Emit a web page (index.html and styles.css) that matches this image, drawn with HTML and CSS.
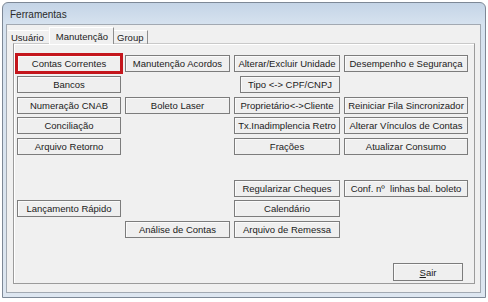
FILE: index.html
```html
<!DOCTYPE html>
<html lang="pt">
<head>
    <meta charset="UTF-8">
    <title>Ferramentas</title>
    <link rel="stylesheet" href="styles.css">
</head>
<body>
    <div class="janela">
        <div class="titulo">Ferramentas</div>
        <div class="cliente">
            <div class="abas">
                <div class="aba">Usuário</div>
                <div class="aba ativa">Manutenção</div>
                <div class="aba">Group</div>
            </div>
            <div class="painel">
                <div class="grade">
                    <button class="botao c1 foco">Contas Correntes</button>
                    <button class="botao c2">Manutenção Acordos</button>
                    <button class="botao c3">Alterar/Excluir Unidade</button>
                    <button class="botao c4">Desempenho e Segurança</button>

                    <button class="botao c1">Bancos</button>
                    <button class="botao c3 estreito">Tipo &lt;-&gt; CPF/CNPJ</button>

                    <button class="botao c1">Numeração CNAB</button>
                    <button class="botao c2">Boleto Laser</button>
                    <button class="botao c3">Proprietário&lt;-&gt;Cliente</button>
                    <button class="botao c4">Reiniciar Fila Sincronizador</button>

                    <button class="botao c1">Conciliação</button>
                    <button class="botao c3">Tx.Inadimplencia Retro</button>
                    <button class="botao c4">Alterar Vínculos de Contas</button>

                    <button class="botao c1">Arquivo Retorno</button>
                    <button class="botao c3">Frações</button>
                    <button class="botao c4">Atualizar Consumo</button>

                    <button class="botao c3 r7">Regularizar Cheques</button>
                    <button class="botao c4 r7">Conf. nº&nbsp; linhas bal. boleto</button>

                    <button class="botao c1 r8">Lançamento Rápido</button>
                    <button class="botao c3 r8">Calendário</button>

                    <button class="botao c2 r9">Análise de Contas</button>
                    <button class="botao c3 r9">Arquivo de Remessa</button>
                </div>
                <div class="rodape">
                    <button class="botao sair"><u>S</u>air</button>
                </div>
            </div>
        </div>
    </div>
</body>
</html>
```

FILE: styles.css
```css
body {
    margin: 0;
    background-color: #fff;
    font-family: "Liberation Sans", Arial, sans-serif;
    font-size: 9.5px;
    color: #1b1b1b;
}

.janela {
    box-sizing: border-box;
    width: 484px;
    height: 296px;
    margin: 2px 0 0 2px;
    padding: 0 4px 4px 3px;
    display: flex;
    flex-direction: column;
    border: 1px solid #7d8896;
    border-radius: 6px 6px 0 0;
    background: linear-gradient(#c4d4e6, #d6e2ef 21px, #dde6f0);
}

.titulo {
    height: 21px;
    line-height: 24px;
    padding-left: 4px;
    font-size: 10px;
    color: #2a2a2a;
}

.cliente {
    flex: 1;
    display: flex;
    flex-direction: column;
    background-color: #f0f0f0;
    border: 1px solid #a2a9b2;
}

.abas {
    display: flex;
    align-items: flex-end;
    height: 18px;
    padding-left: 1px;
}

.aba {
    position: relative;
    height: 13px;
    line-height: 13px;
    padding: 0 4px 0 3px;
    margin-bottom: -1px;
    border-right: 1px solid #8e8e8e;
    border-top: 1px solid #fff;
}

.aba:first-child {
    border-right-color: transparent;
}

.aba.ativa {
    z-index: 1;
    height: 16px;
    line-height: 17px;
    padding: 0 5px 0 6px;
    background-color: #f0f0f0;
    border-left: 1px solid #fff;
}

.painel {
    flex: 1;
    display: flex;
    flex-direction: column;
    margin: 0 5px 8px 6px;
    padding: 11px 0 2px 3px;
    border: 1px solid #9b9b9b;
    border-top-color: #c9c9c9;
    box-shadow: inset 1px 1px 0 #fff;
}

.grade {
    display: grid;
    grid-template-columns: 104px 105px 106px 124px;
    grid-auto-rows: 17px;
    column-gap: 4px;
    row-gap: 3.75px;
}

.c1 { grid-column: 1; }
.c2 { grid-column: 2; }
.c3 { grid-column: 3; }
.c4 { grid-column: 4; }
.r7 { grid-row: 7; }
.r8 { grid-row: 8; }
.r9 { grid-row: 9; }

.botao {
    box-sizing: border-box;
    margin: 0;
    padding: 0 2px;
    font-family: inherit;
    font-size: 9.5px;
    color: #1b1b1b;
    white-space: nowrap;
    background-color: #efefef;
    border: 1px solid #7c7c7c;
    box-shadow: inset 1px 1px 0 #fafafa;
}

.estreito {
    margin-left: 6px;
}

.foco {
    outline: 3px solid #c4161c;
    outline-offset: -1px;
}

.rodape {
    margin-top: auto;
    display: flex;
    justify-content: flex-end;
    padding-right: 11px;
}

.sair {
    width: 70px;
    height: 18px;
}
```
